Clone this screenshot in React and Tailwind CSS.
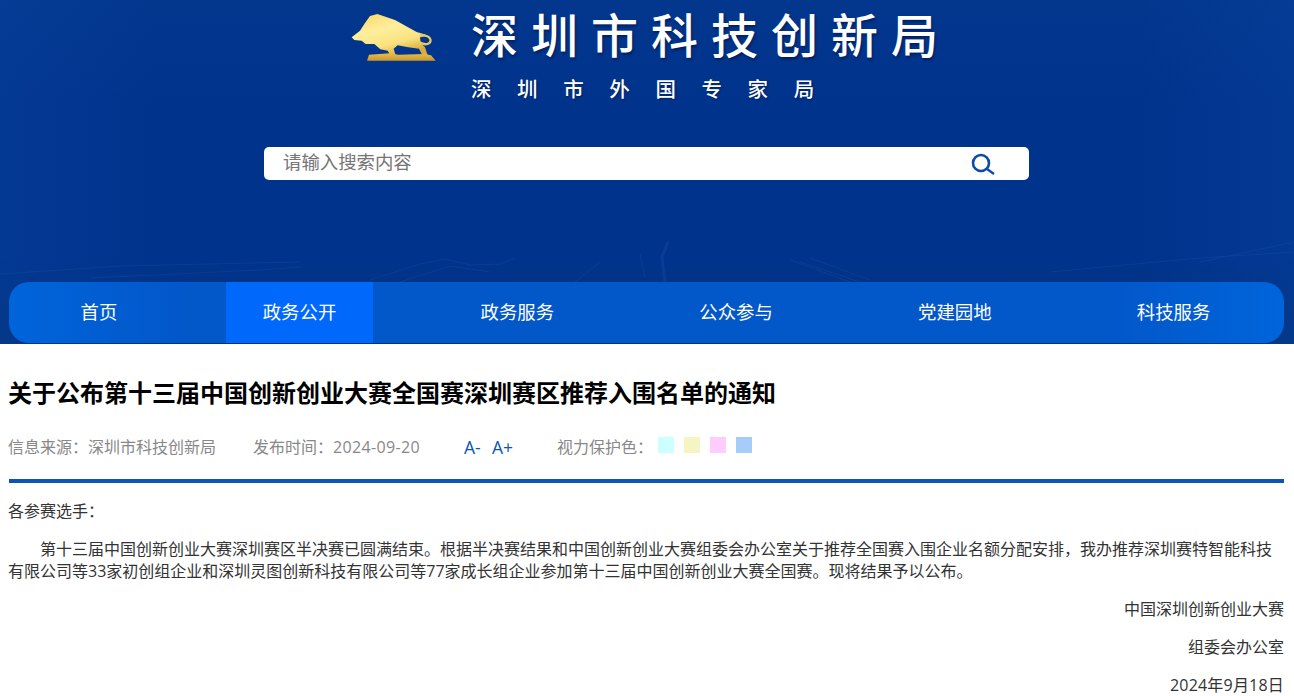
function Bull() {
  return (
    <svg width="100" height="60" viewBox="0 0 300 180" className="shrink-0">
      <defs>
        <linearGradient id="g" x1="0.1" y1="0" x2="0.6" y2="1">
          <stop offset="0" stopColor="#f8d766" />
          <stop offset="0.4" stopColor="#ffee9c" />
          <stop offset="0.75" stopColor="#f9e27e" />
          <stop offset="1" stopColor="#d9ad3d" />
        </linearGradient>
        <linearGradient id="b" x1="0" y1="0" x2="0" y2="1">
          <stop offset="0" stopColor="#e6bd4c" />
          <stop offset="1" stopColor="#c9982f" />
        </linearGradient>
      </defs>
      <path
        d="M20 88 L45 68 L60 45 L75 24 L97 18 L150 36 L215 72 L243 80 L225 88 L227 105 L240 118 L248 142 L232 142 L222 122 L190 118 L158 112 L146 122 L152 142 L136 142 L128 128 L106 124 L88 108 L62 108 L50 98 L28 96 Z"
        fill="url(#g)"
      />
      <path
        d="M222 80 C240 76 262 84 260 100 C258 114 236 116 222 106 L226 100 C238 108 252 106 253 98 C254 88 238 84 226 88 Z"
        fill="#ecc95e"
      />
      <path d="M72 140 L136 136 L160 140 L240 138 L258 142 L272 158 L66 158 Z" fill="url(#b)" />
    </svg>
  );
}

function Texture() {
  return (
    <svg width="1294" height="70" viewBox="0 0 1294 70" fill="none" className="absolute left-0 top-[212px] pointer-events-none" stroke="#2a68c4" strokeWidth="1">
      <g opacity="0.2">
        <path d="M0 62 L120 54 L300 50" />
        <path d="M90 66 L260 58 L300 55" />
        <path d="M370 68 L420 52 L445 47 L470 53 L500 52 L515 46" />
        <path d="M400 70 L450 54 L490 60" />
        <path d="M575 70 L590 58 L600 50" />
        <path d="M665 70 L662 45 L668 30" strokeWidth="3" />
        <path d="M645 66 L640 42" />
        <path d="M790 48 L850 70" />
        <path d="M800 50 L860 70" />
        <path d="M810 46 L870 68" />
        <path d="M1200 50 L1294 30" />
        <path d="M1050 60 L1200 46 L1294 40" />
      </g>
    </svg>
  );
}

function Nav() {
  return (
    <nav className="mx-[9px] w-[1275px] h-[61px] rounded-[20px] bg-[linear-gradient(90deg,#0064db_0%,#0257c9_14%,#0257c9_86%,#0064db_100%)] flex items-stretch overflow-hidden text-white text-[18.4px] leading-[26px]">
      <a className="w-[180px] mr-[37px] pb-[2px] flex items-center justify-center">首页</a>
      <a className="w-[147px] mr-[35px] pb-[2px] bg-[#0068fb] flex items-center justify-center">政务公开</a>
      <a className="w-[218.75px] pb-[2px] flex items-center justify-center">政务服务</a>
      <a className="w-[218.75px] pb-[2px] flex items-center justify-center">公众参与</a>
      <a className="w-[218.75px] pb-[2px] flex items-center justify-center">党建园地</a>
      <a className="w-[218.75px] pb-[2px] flex items-center justify-center">科技服务</a>
    </nav>
  );
}

export default function App() {
  return (
    <div className="w-[1294px] h-[696px] overflow-hidden bg-white font-['Open_Sans','Noto_Sans_CJK_SC',sans-serif]">
      <header className="relative h-[344px] flex flex-col bg-[linear-gradient(90deg,rgba(20,80,180,0.18)_0%,rgba(20,80,180,0)_12%,rgba(20,80,180,0)_88%,rgba(20,80,180,0.18)_100%),linear-gradient(180deg,#03378e_0%,#00338c_30%,#00338c_75%,#01337f_100%)]">
        <Texture />
        <div className="relative flex pl-[345px] pt-[8px] h-[147px]">
          <Bull />
          <div className="ml-[26px] text-white">
            <div className="text-[47px] leading-[54px] tracking-[13px] font-medium whitespace-nowrap [text-shadow:1px_2px_3px_rgba(0,0,30,0.45)]">深圳市科技创新局</div>
            <div className="mt-[14px] text-[20.5px] leading-[26px] tracking-[25.6px] font-medium whitespace-nowrap [text-shadow:1px_1px_2px_rgba(0,0,30,0.4)]">深圳市外国专家局</div>
          </div>
        </div>
        <div className="relative ml-[264px] w-[765px] h-[33px] rounded-[5px] bg-white flex items-center justify-between pl-[19px] pr-[34px]">
          <span className="pb-[3px] text-[18.4px] leading-[26px] text-[#757575]">请输入搜索内容</span>
          <svg width="24" height="22" viewBox="0 0 24 22" fill="none" stroke="#0a4ca8" strokeWidth="2.6">
            <circle cx="10" cy="10" r="8" />
            <path d="M16 16 L23 21" strokeWidth="2.4" />
          </svg>
        </div>
        <div className="relative mt-[102px]"><Nav /></div>
      </header>

      <main className="pl-[8px] text-[16px] leading-[22px] text-[#333]">
        <h1 className="mt-[33px] text-[24px] leading-[32px] font-bold text-black whitespace-nowrap">关于公布第十三届中国创新创业大赛全国赛深圳赛区推荐入围名单的通知</h1>
        <div className="mt-[27px] h-[22px] flex items-center text-[#888] whitespace-nowrap">
          <span className="w-[245px]">信息来源：深圳市科技创新局</span>
          <span className="w-[211px]">发布时间：<span className="tracking-[0.35px]">2024-09-20</span></span>
          <span className="text-[#0a55b5] text-[17.5px] w-[28px]">A-</span>
          <span className="text-[#0a55b5] text-[17.5px] w-[65px]">A+</span>
          <span className="w-[101px]">视力保护色：</span>
          <div className="flex gap-[10px] -mt-[5px]">
            <i className="block w-[16px] h-[16px] bg-[#ccffff]" />
            <i className="block w-[16px] h-[16px] bg-[#f5f5c4]" />
            <i className="block w-[16px] h-[16px] bg-[#ffccff]" />
            <i className="block w-[16px] h-[16px] bg-[#a5cdf7]" />
          </div>
        </div>
        <div className="mt-[21px] ml-[1px] h-[4px] bg-[#0a55b5] w-[1275px]" />
        <div className="pt-[17px] w-[1276px]">
          <p className="mb-[16px]">各参赛选手：</p>
          <p className="mb-[16px] indent-[32px]">第十三届中国创新创业大赛深圳赛区半决赛已圆满结束。根据半决赛结果和中国创新创业大赛组委会办公室关于推荐全国赛入围企业名额分配安排，我办推荐深圳赛特智能科技有限公司等33家初创组企业和深圳灵图创新科技有限公司等77家成长组企业参加第十三届中国创新创业大赛全国赛。现将结果予以公布。</p>
          <p className="mb-[16px] text-right">中国深圳创新创业大赛</p>
          <p className="mb-[16px] text-right">组委会办公室</p>
          <p className="mb-[16px] text-right tracking-[0.2px]">2024年9月18日</p>
        </div>
      </main>
    </div>
  );
}
